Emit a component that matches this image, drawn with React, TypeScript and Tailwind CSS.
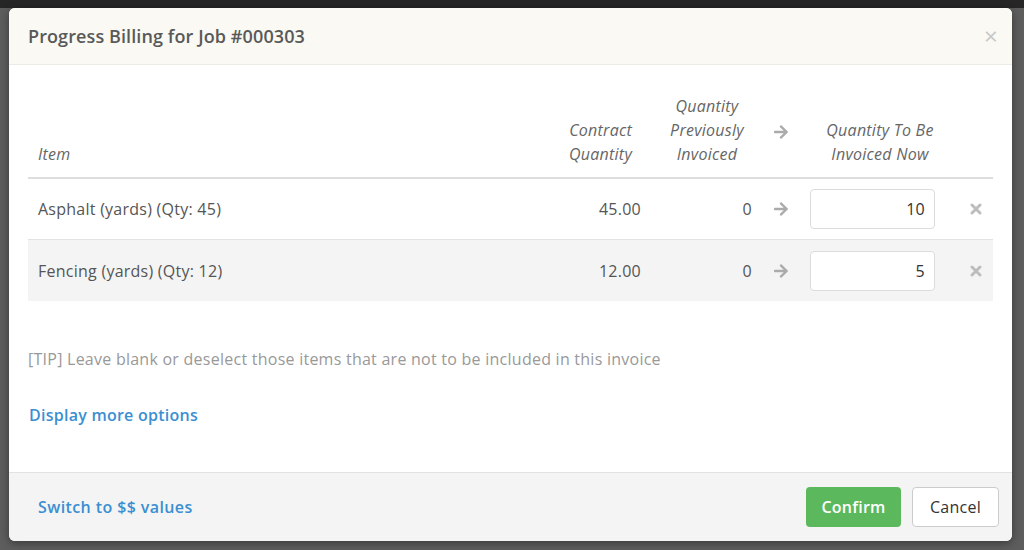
import React from "react";
import { FaArrowRight } from "react-icons/fa";

const rows = [
  { name: "Asphalt (yards) (Qty: 45)", contract: "45.00", prev: "0", now: "10" },
  { name: "Fencing (yards) (Qty: 12)", contract: "12.00", prev: "0", now: "5" },
];

const RemoveIcon = () => (
  <svg width="12" height="12" viewBox="0 0 12 12">
    <path d="M2 2 L10 10 M10 2 L2 10" stroke="currentColor" strokeWidth="3" strokeLinecap="round" />
  </svg>
);

const App = () => {
  return (
    <div
      className="h-[550px] w-[1024px] overflow-hidden bg-[#5d5d5d] tracking-[0.25px]"
      style={{ fontFamily: "'Open Sans', 'Liberation Sans', sans-serif" }}
    >
      <div className="h-[8px] bg-[#262626]" />
      <div className="ml-[9px] flex h-[533px] w-[1003px] flex-col overflow-hidden rounded-[6px] bg-white shadow-[0_2px_8px_rgba(0,0,0,0.4)]">
        {/* header */}
        <div className="flex h-[57px] items-center justify-between border-b border-[#ecebe4] bg-[#faf9f3] pl-[19px] pr-[14px]">
          <h3 className="text-[18px] font-semibold tracking-[0.1px] text-[#595959]">
            Progress Billing for Job #000303
          </h3>
          <span className="text-[24px] leading-none text-[#c8c8c8]">×</span>
        </div>

        {/* body */}
        <div className="flex-1 px-[19px] pt-[29px]">
          <div className="flex items-end border-b-2 border-[#dddddd] pb-[11px] text-[16px] italic leading-[24px] text-[#666666]">
            <div className="w-[512px] pl-[10px]">Item</div>
            <div className="w-[112px] pr-[20px] text-right">
              Contract
              <br />
              Quantity
            </div>
            <div className="w-[110px] text-center">
              Quantity
              <br />
              Previously
              <br />
              Invoiced
            </div>
            <div className="flex w-[38px] justify-center self-center pt-[3px] text-[#ababab]">
              <FaArrowRight size={16} />
            </div>
            <div className="w-[152px] pl-[8px] text-center">
              Quantity To Be
              <br />
              Invoiced Now
            </div>
            <div className="w-[41px]" />
          </div>

          {rows.map((r, i) => (
            <div
              key={r.name}
              className={`flex h-[61px] items-center text-[16px] text-[#555555] ${
                i === 0 ? "border-b border-[#e2e2e2]" : "bg-[#f4f4f4]"
              }`}
            >
              <div className="w-[512px] pl-[10px]">{r.name}</div>
              <div className="w-[112px] pr-[11px] text-right">{r.contract}</div>
              <div className="w-[110px] pr-[10px] text-right">{r.prev}</div>
              <div className="flex w-[38px] justify-center text-[#ababab]">
                <FaArrowRight size={16} />
              </div>
              <div className="w-[152px] pl-[10px]">
                <input
                  readOnly
                  value={r.now}
                  className="h-[40px] w-[125px] rounded-[4px] border border-[#dcdcdc] bg-white px-[9px] text-right text-[16px] text-[#333333] outline-none"
                />
              </div>
              <div className="flex w-[41px] justify-end pr-[11px] text-[#bdbdbd]">
                <RemoveIcon />
              </div>
            </div>
          ))}

          <p className="mt-[46px] text-[16px] text-[#999999]">
            [TIP] Leave blank or deselect those items that are not to be included in this invoice
          </p>
          <p className="mt-[32px] pl-[1px] text-[16px] font-semibold text-[#3a8fd2]">
            Display more options
          </p>
        </div>

        {/* footer */}
        <div className="flex h-[69px] items-center justify-between border-t border-[#e2e2e2] bg-[#f4f4f4] pl-[29px] pr-[13px]">
          <span className="text-[16px] font-semibold tracking-[0.4px] text-[#3a8fd2]">
            Switch to $$ values
          </span>
          <div className="flex gap-[11px]">
            <button className="h-[40px] w-[95px] rounded-[4px] bg-[#5cb85c] text-[16px] font-semibold text-white">
              Confirm
            </button>
            <button className="h-[40px] w-[87px] rounded-[4px] border border-[#cccccc] bg-white text-[16px] text-[#333333]">
              Cancel
            </button>
          </div>
        </div>
      </div>
    </div>
  );
};

export default App;
